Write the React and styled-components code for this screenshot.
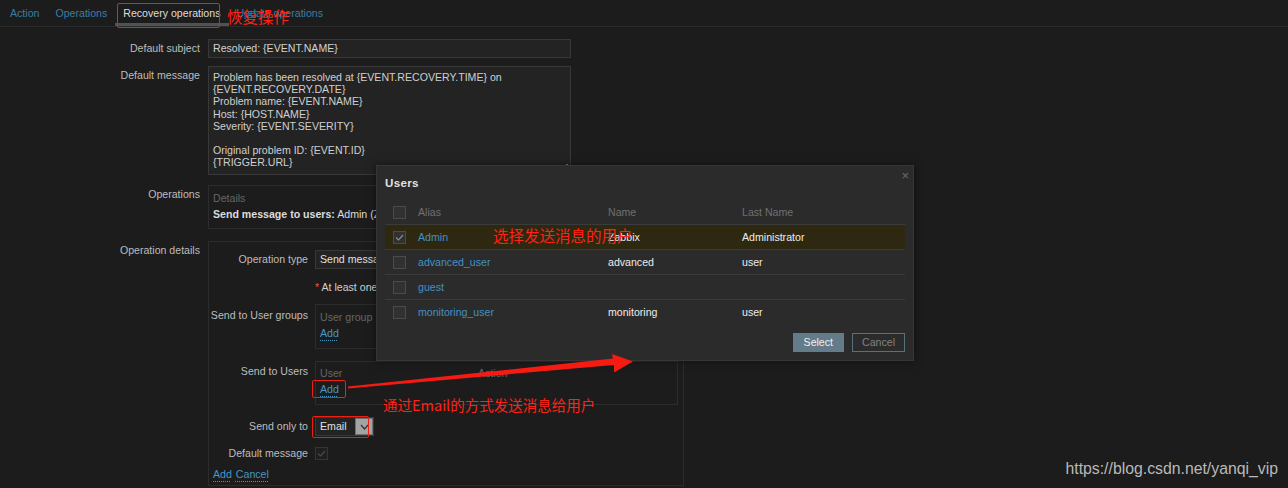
import styled, { createGlobalStyle } from "styled-components";

const GlobalStyle = createGlobalStyle`
	body {
		margin: 0;
		background: #1c1c1c;
		font-family: "Liberation Sans", Arial, sans-serif;
		font-size: 10.6px;
		color: #d2d2d2;
	}
`;

const Page = styled.div`
	position: relative;
	width: 1288px;
	height: 488px;
	overflow: hidden;
`;

const TabBar = styled.div`
	display: flex;
	height: 26px;
	padding-left: 2px;
	border-bottom: 1px solid #2a2a2a;
`;

const Tab = styled.div`
	position: relative;
	padding: 0 8px;
	line-height: 27px;
	color: ${(p) => (p.$active ? "#dcdcdc" : "#3c7ca6")};

	&::after {
		content: "";
		display: ${(p) => (p.$active ? "block" : "none")};
		position: absolute;
		left: 0;
		right: -1px;
		bottom: 0;
		height: 3px;
		background: #4f5356;
	}
`;

const Form = styled.div`
	padding-top: 12px;
`;

const Row = styled.div`
	display: grid;
	grid-template-columns: ${(p) => p.$labelWidth || 200}px auto;
	column-gap: ${(p) => p.$gap || 8}px;
	align-items: start;
	margin-bottom: ${(p) => p.$mb || 0}px;
`;

const Label = styled.div`
	text-align: right;
	line-height: 19px;
	padding-top: ${(p) => p.$pt || 0}px;
	color: #bdbdbd;
	white-space: nowrap;
`;

const Input = styled.div`
	box-sizing: border-box;
	width: ${(p) => p.$w}px;
	height: 19px;
	line-height: 17px;
	padding: 0 4px;
	background: #232323;
	border: 1px solid #383838;
	color: #d2d2d2;
	white-space: nowrap;
	overflow: hidden;
`;

const TextArea = styled.div`
	position: relative;
	box-sizing: border-box;
	width: 363px;
	height: 109px;
	padding: 4px 4px;
	background: #232323;
	border: 1px solid #383838;
	line-height: 12.2px;
	color: #cfcfcf;
	white-space: pre;

	&::after {
		content: "";
		position: absolute;
		right: 2px;
		bottom: 8px;
		width: 2px;
		height: 2px;
		background: #777;
	}
`;

const Box = styled.div`
	box-sizing: border-box;
	width: ${(p) => p.$w}px;
	border: 1px solid #2c2c2c;
	padding: ${(p) => p.$pad};
`;

const Muted = styled.div`
	line-height: 16px;
	color: #666;
`;

const Strong = styled.div`
	line-height: 16px;
	color: #dcdcdc;
	white-space: nowrap;

	b {
		font-weight: bold;
	}
`;

const Hint = styled.div`
	line-height: 19px;
	color: #cfcfcf;
	white-space: nowrap;

	span {
		color: #e45959;
	}
`;

const ListHead = styled.div`
	display: grid;
	grid-template-columns: 158px auto;
	line-height: 16px;
	color: #666;
`;

const Link = styled.span`
	display: inline-block;
	line-height: 16px;
	color: #4796c4;
	text-decoration: underline dotted;
	text-underline-offset: 3px;
	margin-right: ${(p) => p.$mr || 0}px;
`;

const Select = styled.div`
	box-sizing: border-box;
	display: flex;
	align-items: stretch;
	width: ${(p) => p.$w}px;
	height: 19px;
	background: #232323;
	border: 1px solid #383838;
	color: #e0e0e0;
	white-space: nowrap;
`;

const SelectText = styled.div`
	flex: 1;
	line-height: 17px;
	padding-left: 4px;
`;

const SelectButton = styled.div`
	width: 16px;
	display: flex;
	align-items: center;
	justify-content: center;
	background: #a3a3a3;
	border: 1px solid #6f6f6f;
`;

const Check = styled.span`
	box-sizing: border-box;
	display: inline-flex;
	align-items: center;
	justify-content: center;
	width: 13px;
	height: 13px;
	background: ${(p) => (p.$dim ? "#1f1f1f" : "#313131")};
	border: 1px solid ${(p) => (p.$dim ? "#353535" : "#4b4b4b")};
`;

const CheckCell = styled.div`
	padding-top: 3px;
`;

const FooterLinks = styled.div`
	padding-left: 4px;
`;

const Modal = styled.div`
	position: absolute;
	left: 376px;
	top: 165px;
	box-sizing: border-box;
	width: 538px;
	padding: 0 8px 8px;
	background: #2b2b2b;
	border: 1px solid #363636;
	box-shadow: 0 0 8px rgba(0, 0, 0, 0.5);
`;

const ModalTitle = styled.div`
	padding-top: 9px;
	line-height: 16px;
	font-size: 11.6px;
	font-weight: bold;
	color: #e2e2e2;
	letter-spacing: 0.3px;
`;

const Close = styled.div`
	position: absolute;
	top: 2px;
	right: 4px;
	font-size: 13px;
	color: #6b6b6b;
`;

const UserTable = styled.div`
	margin-top: 9px;
`;

const UserRow = styled.div`
	display: grid;
	grid-template-columns: 33px 190px 134px auto;
	align-items: center;
	height: 24px;
	border-bottom: 1px solid ${(p) => (p.$last ? "transparent" : "#3b3b3b")};
	background: ${(p) => (p.$selected ? "#2f2810" : "transparent")};
	color: ${(p) => (p.$head ? "#707070" : "#ececec")};

	& > :first-child {
		padding-left: 8px;
		display: flex;
	}
`;

const Alias = styled.span`
	color: #4291c2;
`;

const ModalFooter = styled.div`
	display: flex;
	justify-content: flex-end;
	gap: 8px;
	margin-top: 8px;
`;

const Button = styled.div`
	box-sizing: border-box;
	height: 19px;
	line-height: 17px;
	padding: 0 ${(p) => p.$px}px;
	border: 1px solid ${(p) => (p.$primary ? "#647c8a" : "#57707e")};
	background: ${(p) => (p.$primary ? "#647c8a" : "transparent")};
	color: ${(p) => (p.$primary ? "#f2f2f2" : "#828282")};
`;

const MarkBox = styled.div`
	position: absolute;
	left: ${(p) => p.$x}px;
	top: ${(p) => p.$y}px;
	width: ${(p) => p.$w}px;
	height: ${(p) => p.$h}px;
	box-sizing: border-box;
	border: 1px solid #f01f14;
	border-radius: 2px;
	pointer-events: none;
`;

const Note = styled.div`
	position: absolute;
	left: ${(p) => p.$x}px;
	top: ${(p) => p.$y}px;
	font-family: "Noto Sans CJK SC", "Liberation Sans", sans-serif;
	font-size: ${(p) => p.$size}px;
	line-height: 16px;
	color: #ff2216;
	white-space: nowrap;
`;

const Arrow = styled.svg`
	position: absolute;
	left: 0;
	top: 0;
	pointer-events: none;
`;

const Watermark = styled.div`
	position: absolute;
	right: 10px;
	top: 460px;
	font-size: 15.8px;
	line-height: 18px;
	color: #b9b9b9;
`;

function Tick({ color }) {
	return (
		<svg width="9" height="7" viewBox="0 0 9 7">
			<polyline points="1,3.5 3.5,6 8,1" fill="none" stroke={color} strokeWidth="1.2" />
		</svg>
	);
}

const message = `Problem has been resolved at {EVENT.RECOVERY.TIME} on
{EVENT.RECOVERY.DATE}
Problem name: {EVENT.NAME}
Host: {HOST.NAME}
Severity: {EVENT.SEVERITY}

Original problem ID: {EVENT.ID}
{TRIGGER.URL}`;

const users = [
	{ alias: "Admin", name: "Zabbix", last: "Administrator", checked: true },
	{ alias: "advanced_user", name: "advanced", last: "user" },
	{ alias: "guest", name: "", last: "" },
	{ alias: "monitoring_user", name: "monitoring", last: "user" },
];

export default function App() {
	return (
		<Page>
			<GlobalStyle />
			<TabBar>
				<Tab>Action</Tab>
				<Tab>Operations</Tab>
				<Tab $active>Recovery operations</Tab>
				<Tab>Update operations</Tab>
			</TabBar>

			<Form>
				<Row $mb={8}>
					<Label>Default subject</Label>
					<Input $w={363}>Resolved: {"{EVENT.NAME}"}</Input>
				</Row>
				<Row $mb={10}>
					<Label>Default message</Label>
					<TextArea>{message}</TextArea>
				</Row>
				<Row $mb={12}>
					<Label>Operations</Label>
					<Box $w={475} $pad="4px 5px 6px 4px">
						<Muted>Details</Muted>
						<Strong>
							<b>Send message to users:</b> Admin (Zabbix Administrator) via all media
						</Strong>
					</Box>
				</Row>
				<Row>
					<Label>Operation details</Label>
					<Box $w={476} $pad="8px 5px 3px 0">
						<Row $labelWidth={99} $gap={7} $mb={9}>
							<Label>Operation type</Label>
							<Select $w={210}>
								<SelectText>Send message</SelectText>
							</Select>
						</Row>
						<Row $labelWidth={99} $gap={7} $mb={7}>
							<div />
							<Hint>
								<span>*</span> At least one user or user group must be selected.
							</Hint>
						</Row>
						<Row $labelWidth={99} $gap={7} $mb={12}>
							<Label $pt={2}>Send to User groups</Label>
							<Box $w={363} $pad="4px 5px 7px 4px">
								<ListHead>
									<span>User group</span>
									<span>Action</span>
								</ListHead>
								<Link>Add</Link>
							</Box>
						</Row>
						<Row $labelWidth={99} $gap={7} $mb={12}>
							<Label $pt={1}>Send to Users</Label>
							<Box $w={363} $pad="3px 5px 7px 4px">
								<ListHead>
									<span>User</span>
									<span>Action</span>
								</ListHead>
								<Link>Add</Link>
							</Box>
						</Row>
						<Row $labelWidth={99} $gap={7} $mb={8}>
							<Label>Send only to</Label>
							<Select $w={59}>
								<SelectText>Email</SelectText>
								<SelectButton>
									<svg width="9" height="6" viewBox="0 0 9 6">
										<polyline points="1,1 4.5,5 8,1" fill="none" stroke="#333" strokeWidth="1.2" />
									</svg>
								</SelectButton>
							</Select>
						</Row>
						<Row $labelWidth={99} $gap={7} $mb={3}>
							<Label>Default message</Label>
							<CheckCell>
								<Check $dim>
									<Tick color="#4a4a4a" />
								</Check>
							</CheckCell>
						</Row>
						<FooterLinks>
							<Link $mr={4}>Add</Link>
							<Link>Cancel</Link>
						</FooterLinks>
					</Box>
				</Row>
			</Form>

			<Modal>
				<ModalTitle>Users</ModalTitle>
				<Close>×</Close>
				<UserTable>
					<UserRow $head>
						<span>
							<Check />
						</span>
						<span>Alias</span>
						<span>Name</span>
						<span>Last Name</span>
					</UserRow>
					{users.map((u, i) => (
						<UserRow key={u.alias} $selected={u.checked} $last={i === users.length - 1}>
							<span>
								<Check>{u.checked && <Tick color="#8c8c8c" />}</Check>
							</span>
							<Alias>{u.alias}</Alias>
							<span>{u.name}</span>
							<span>{u.last}</span>
						</UserRow>
					))}
				</UserTable>
				<ModalFooter>
					<Button $primary $px={10}>Select</Button>
					<Button $px={9}>Cancel</Button>
				</ModalFooter>
			</Modal>

			<MarkBox $x={117} $y={3} $w={103} $h={25} />
			<Note $x={227} $y={8} $size={15.5}>恢复操作</Note>
			<Note $x={493} $y={227} $size={15.5}>选择发送消息的用户</Note>
			<MarkBox $x={312} $y={380} $w={34} $h={18} />
			<MarkBox $x={312} $y={416} $w={57} $h={22} />
			<Note $x={383} $y={397} $size={14.5}>通过Email的方式发送消息给用户</Note>

			<Arrow width="1288" height="488" viewBox="0 0 1288 488">
				<polygon
					points="348,386.6 613,358.6 612,354 633,361.5 614,372.5 614,365 348,388.4"
					fill="#f51a12"
				/>
			</Arrow>

			<Watermark>https://blog.csdn.net/yanqi_vip</Watermark>
		</Page>
	);
}
